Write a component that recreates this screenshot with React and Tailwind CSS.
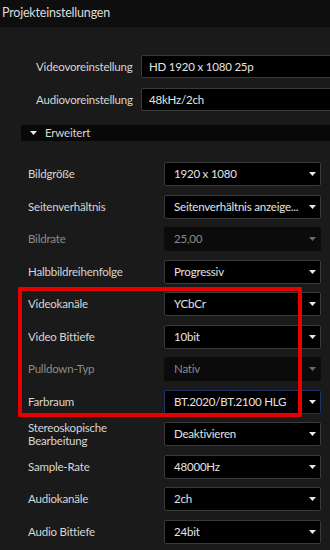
// Projekteinstellungen – Dialog-Nachbau
const font = { fontFamily: 'Lato, "Noto Sans", sans-serif' }

function Arrow({ dim }) {
  return (
    <svg width="7" height="4" viewBox="0 0 7 4" className="shrink-0">
      <path d="M0 0 L7 0 L3.5 4 Z" fill={dim ? '#6a6a6a' : '#e6e6e6'} />
    </svg>
  )
}

function Row({ label, value, disabled, active, twoLine }) {
  return (
    <div className="flex h-[24px] items-center">
      <div
        className={
          'flex-1 text-[11.5px] tracking-[-0.2px] ' +
          (twoLine ? 'leading-[13px] ' : 'leading-none ') +
          (disabled ? 'text-[#8c8c8c]' : 'text-[#d6d6d6]')
        }
      >
        {label}
      </div>
      <div
        className={
          'flex h-[24px] w-[157px] items-center justify-between rounded-[2px] border pl-[9px] pr-[4px] text-[11.5px] tracking-[-0.2px] ' +
          (disabled
            ? 'border-[#0b0b0b] bg-[#0b0b0b] text-[#8a8a8a]'
            : active
            ? 'border-[#1c3566] bg-black text-[#e4e4e4]'
            : 'border-[#3a3a3a] bg-black text-[#e4e4e4]')
        }
      >
        <span className="whitespace-nowrap">{value}</span>
        <Arrow dim={disabled} />
      </div>
    </div>
  )
}

const rows = [
  { label: 'Bildgröße', value: '1920 x 1080' },
  { label: 'Seitenverhältnis', value: 'Seitenverhältnis anzeige...' },
  { label: 'Bildrate', value: '25,00', disabled: true },
  { label: 'Halbbildreihenfolge', value: 'Progressiv' },
  { label: 'Videokanäle', value: 'YCbCr' },
  { label: 'Video Bittiefe', value: '10bit' },
  { label: 'Pulldown-Typ', value: 'Nativ', disabled: true },
  { label: 'Farbraum', value: 'BT.2020/BT.2100 HLG', active: true },
  { label: <>Stereoskopische<br />Bearbeitung</>, value: 'Deaktivieren', twoLine: true },
  { label: 'Sample-Rate', value: '48000Hz' },
  { label: 'Audiokanäle', value: ' 2ch' },
  { label: 'Audio Bittiefe', value: '24bit' },
]

export default function App() {
  return (
    <div className="relative flex h-[550px] w-[330px] flex-col overflow-hidden bg-[#1a1a1a]" style={font}>
      <div className="flex h-[27px] shrink-0 items-center bg-[#0e0e0e] px-[2px] text-[12.5px] tracking-[-0.2px] text-[#dcdcdc]">
        Projekteinstellungen
      </div>

      <div className="flex flex-col gap-[10px] pl-[36px] pt-[28px]">
        {[
          ['Videovoreinstellung', 'HD 1920 x 1080 25p'],
          ['Audiovoreinstellung', '48kHz/2ch'],
        ].map(([l, v]) => (
          <div key={l} className="flex h-[23px] items-center">
            <div className="w-[105px] shrink-0 whitespace-nowrap text-[11.5px] tracking-[-0.2px] text-[#d6d6d6]">{l}</div>
            <div className="flex h-[23px] w-[220px] shrink-0 items-center rounded-[2px] border border-[#3a3a3a] bg-black pl-[7px] text-[11.5px] tracking-[-0.2px] text-[#e4e4e4]">
              {v}
            </div>
          </div>
        ))}
      </div>

      <div className="ml-[21px] mt-[14px] flex h-[16px] items-center gap-[8px] bg-[#080808] pl-[9px] text-[11.5px] tracking-[-0.2px] text-[#d6d6d6]">
        <Arrow />
        <span>Erweitert</span>
      </div>

      <div className="flex flex-col gap-[8.5px] pl-[28px] pr-[9px] pt-[21px]">
        {rows.map((r, i) => (
          <Row key={i} {...r} />
        ))}
      </div>

      <div className="pointer-events-none absolute left-[18px] top-[287px] h-[130px] w-[284px] border-4 border-[#e60000]" />
    </div>
  )
}
